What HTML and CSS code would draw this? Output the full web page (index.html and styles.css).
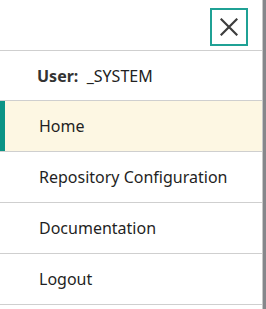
FILE: index.html
```html
<!DOCTYPE html>
<html lang="en">
<head>
    <meta charset="UTF-8">
    <meta name="viewport" content="width=device-width, initial-scale=1.0">
    <title>Menu</title>
    <link rel="stylesheet" href="styles.css">
</head>
<body>
    <div class="side-menu">
        <div class="menu-header">
            <button class="close-btn" aria-label="Close">
                <svg width="18" height="18" viewBox="0 0 18 18">
                    <path d="M1.5 1.5 L16.5 16.5 M16.5 1.5 L1.5 16.5" stroke="#3d3d3d" stroke-width="2.2" stroke-linecap="square"/>
                </svg>
            </button>
        </div>
        <div class="menu-user"><b>User:</b>&nbsp; _SYSTEM</div>
        <a class="menu-item active" href="#">Home</a>
        <a class="menu-item" href="#">Repository Configuration</a>
        <a class="menu-item" href="#">Documentation</a>
        <a class="menu-item" href="#">Logout</a>
    </div>
</body>
</html>
```

FILE: styles.css
```css
body {
    margin: 0;
    height: 100vh;
    background-color: #85878b;
    font-family: "Noto Sans", "Open Sans", Arial, sans-serif;
    overflow: hidden;
}
.side-menu {
    width: 262px;
    height: 100%;
    background-color: #fff;
    border-right: 1px solid #c8c8c8;
}
.menu-header {
    height: 51px;
    box-sizing: border-box;
    border-bottom: 1px solid #cfcfcf;
    display: flex;
    justify-content: flex-end;
    align-items: flex-start;
    padding: 8px 14px 0 0;
}
.close-btn {
    width: 38px;
    height: 38px;
    box-sizing: border-box;
    border: 2px solid #1fa195;
    background: #fff;
    padding: 0;
    display: flex;
    align-items: center;
    justify-content: center;
    cursor: pointer;
}
.menu-user {
    height: 49px;
    border-bottom: 1px solid #cfcfcf;
    padding-left: 37px;
    display: flex;
    align-items: center;
    font-size: 16px;
    color: #222;
}
.menu-user b {
    color: #333;
}
.menu-item {
    display: flex;
    align-items: center;
    height: 50px;
    padding-left: 39px;
    border-bottom: 1px solid #cfcfcf;
    font-size: 16px;
    color: #1f1f24;
    text-decoration: none;
}
.menu-item.active {
    background-color: #fdf7e3;
    box-shadow: inset 5px 0 0 #0b9486;
}
```
